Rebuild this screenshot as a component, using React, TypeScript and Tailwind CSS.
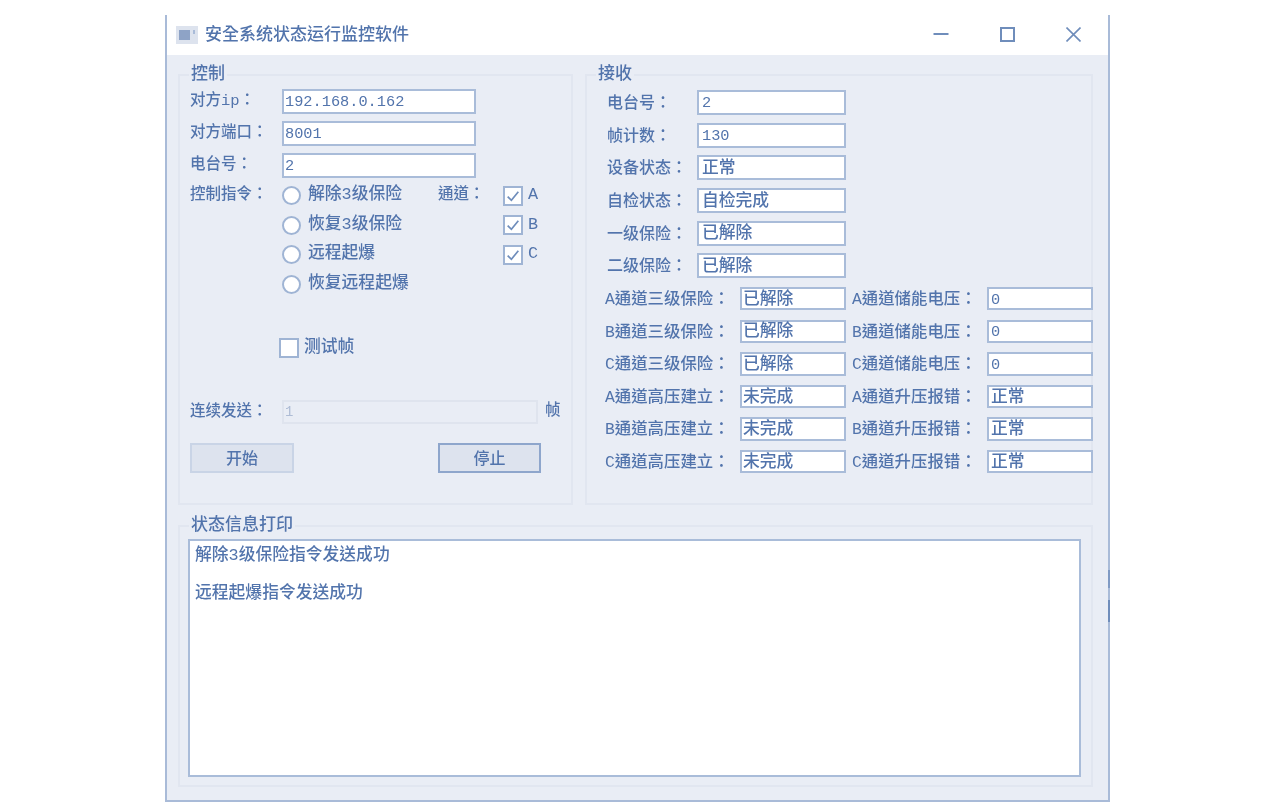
const labelText = "shrink-0 text-[15.5px] leading-none whitespace-nowrap text-[#5274ac] font-medium";

function Field({ value, className }: { value: string; className: string }) {
  const numeric = /^[0-9.]+$/.test(value);
  return (
    <div
      className={`flex shrink-0 items-center border-2 border-[#a9bcd9] bg-white pt-[3px] leading-none whitespace-nowrap text-[#5274ac] font-medium ${
        numeric ? "text-[15.3px]" : "text-[16.8px]"
      } ${className}`}
    >
      {value}
    </div>
  );
}

function Group({
  title,
  className,
  children,
}: {
  title: string;
  className: string;
  children: React.ReactNode;
}) {
  return (
    <div className={`relative border-2 border-[#e1e6f0] ${className}`}>
      <span className="absolute -top-[10px] left-[9px] bg-[#e9edf5] px-[2px] text-[17px] leading-[18px] font-medium whitespace-nowrap text-[#5274ac]">
        {title}
      </span>
      {children}
    </div>
  );
}

function Radio({ label }: { label: string }) {
  return (
    <div className="flex items-center gap-[7px]">
      <span className="h-[19px] w-[19px] rounded-full border-2 border-[#9fb4d4] bg-white" />
      <span className="text-[16.8px] leading-none font-medium whitespace-nowrap text-[#5274ac]">{label}</span>
    </div>
  );
}

function Check({ label, checked = true }: { label: string; checked?: boolean }) {
  return (
    <div className="flex items-center gap-[5px]">
      <span className="flex h-[20px] w-[20px] items-center justify-center border-2 border-[#9fb4d4] bg-white">
        {checked && (
          <svg width="16" height="16" viewBox="0 0 15 15" fill="none" stroke="#6f8dbb" strokeWidth="1.6">
            <path d="M2.5 8 L6 11.5 L12.5 3.5" />
          </svg>
        )}
      </span>
      <span className={`${labelText} text-[16.8px]`}>{label}</span>
    </div>
  );
}

const topRows = [
  ["电台号：", "2"],
  ["帧计数：", "130"],
  ["设备状态：", "正常"],
  ["自检状态：", "自检完成"],
  ["一级保险：", "已解除"],
  ["二级保险：", "已解除"],
];

const wideRows = [
  ["A通道三级保险：", "已解除", "A通道储能电压：", "0"],
  ["B通道三级保险：", "已解除", "B通道储能电压：", "0"],
  ["C通道三级保险：", "已解除", "C通道储能电压：", "0"],
  ["A通道高压建立：", "未完成", "A通道升压报错：", "正常"],
  ["B通道高压建立：", "未完成", "B通道升压报错：", "正常"],
  ["C通道高压建立：", "未完成", "C通道升压报错：", "正常"],
];

export default function App() {
  return (
    <div className="h-[802px] w-[1276px] overflow-hidden bg-white pt-[15px] pl-[165px] font-['Liberation_Mono','Noto_Sans_CJK_TC',monospace]">
      <div className="relative flex h-[787px] w-[945px] flex-col border-x-2 border-b-2 border-[#a9bbd8] blur-[0.7px]">
        {/* title bar */}
        <div className="flex h-[40px] shrink-0 items-center bg-white pl-[9px]">
          <svg width="22" height="18" viewBox="0 0 22 18">
            <rect width="22" height="18" fill="#dde3ee" />
            <rect x="3" y="4" width="11" height="10" fill="#8ea3c6" />
            <rect x="17" y="4" width="2" height="4" fill="#a9bbd8" />
          </svg>
          <span className="ml-[7px] text-[17px] leading-none font-medium whitespace-nowrap text-[#5274ac]">
            安全系统状态运行监控软件
          </span>
          <div className="ml-auto flex items-center gap-[51px] pr-[27px] pb-[2px]">
            <svg width="16" height="16" viewBox="0 0 16 16" stroke="#6f8dbb" strokeWidth="2" fill="none">
              <path d="M0.5 8 H15.5" />
            </svg>
            <svg width="15" height="15" viewBox="0 0 15 15" stroke="#6f8dbb" strokeWidth="2" fill="none">
              <rect x="1" y="1" width="13" height="13" />
            </svg>
            <svg width="15" height="15" viewBox="0 0 15 15" stroke="#6f8dbb" strokeWidth="1.6" fill="none">
              <path d="M0.5 0.5 L14.5 14.5 M14.5 0.5 L0.5 14.5" />
            </svg>
          </div>
        </div>

        {/* body */}
        <div className="flex flex-1 flex-col gap-[20px] bg-[#e9edf5] pt-[19px] pr-[15px] pl-[11px]">
          <div className="flex gap-[12px]">
            <Group title="控制" className="h-[431px] w-[395px] px-[10px] pt-[13px]">
              <div className="flex flex-col gap-[7px]">
                <div className="flex items-center">
                  <span className={`${labelText} w-[92px]`}>对方ip：</span>
                  <Field value="192.168.0.162" className="h-[25px] w-[194px] pl-[1px]" />
                </div>
                <div className="flex items-center">
                  <span className={`${labelText} w-[92px]`}>对方端口：</span>
                  <Field value="8001" className="h-[25px] w-[194px] pl-[1px]" />
                </div>
                <div className="flex items-center">
                  <span className={`${labelText} w-[92px]`}>电台号：</span>
                  <Field value="2" className="h-[25px] w-[194px] pl-[1px]" />
                </div>
              </div>

              <div className="mt-[3px] grid grid-cols-[92px_156px_65px_1fr] auto-rows-[29.5px] items-center">
                <span className={labelText}>控制指令：</span>
                <Radio label="解除3级保险" />
                <span className={labelText}>通道：</span>
                <Check label="A" />
                <span />
                <Radio label="恢复3级保险" />
                <span />
                <Check label="B" />
                <span />
                <Radio label="远程起爆" />
                <span />
                <Check label="C" />
                <span />
                <Radio label="恢复远程起爆" />
              </div>

              <div className="mt-[39px] pl-[89px]">
                <Check label="测试帧" checked={false} />
              </div>

              <div className="mt-[42px] flex items-center">
                <span className={`${labelText} w-[92px] pt-[2px]`}>连续发送：</span>
                <div className="flex h-[24px] w-[256px] shrink-0 items-center border-2 border-[#dfe4ee] pl-[1px] text-[14px] leading-none text-[#aebcd5]">
                  1
                </div>
                <span className={`${labelText} ml-[7px]`}>帧</span>
              </div>

              <div className="mt-[19px] flex items-center gap-[144px]">
                <button className="h-[30px] w-[104px] shrink-0 border-2 border-[#c9d4e6] bg-[#dde3ee] pt-[4px] text-[16px] leading-none font-medium text-[#5274ac]">
                  开始
                </button>
                <button className="h-[30px] w-[103px] shrink-0 border-2 border-[#8ea6cc] bg-[#dde3ee] pt-[4px] text-[16px] leading-none font-medium text-[#5274ac]">
                  停止
                </button>
              </div>
            </Group>

            <Group title="接收" className="h-[431px] w-[508px] pt-[14px] pl-[18px]">
              <div className="flex flex-col gap-[7.7px]">
                {topRows.map(([label, value]) => (
                  <div key={label} className="flex items-center">
                    <span className={`${labelText} w-[92px] pt-[3px] pl-[2px] text-[16px]`}>{label}</span>
                    <Field value={value} className="h-[25px] w-[149px] pl-[3px]" />
                  </div>
                ))}
              </div>
              <div className="mt-[8.5px] flex flex-col gap-[9.1px]">
                {wideRows.map(([labelA, valueA, labelB, valueB]) => (
                  <div key={labelA} className="flex items-center">
                    <span className={`${labelText} w-[135px] pt-[3px] text-[16.4px]`}>{labelA}</span>
                    <Field value={valueA} className="h-[23.5px] w-[106px] pl-[1px]" />
                    <span className={`${labelText} ml-[6px] w-[135px] pt-[3px] text-[16.4px]`}>{labelB}</span>
                    <Field value={valueB} className="h-[23.5px] w-[106px] pl-[2px]" />
                  </div>
                ))}
              </div>
            </Group>
          </div>

          <Group title="状态信息打印" className="h-[262px] w-[915px] px-[8px] pt-[13px]">
            <div className="-mt-[1px] h-[238px] w-[893px] border-2 border-[#a9bcd9] bg-white pt-[7px] pl-[5px] text-[16.8px] leading-none font-medium text-[#5274ac]">
              <p>解除3级保险指令发送成功</p>
              <p className="mt-[21px]">远程起爆指令发送成功</p>
            </div>
          </Group>
        </div>

        {/* stray marks on the right edge */}
        <div className="absolute top-[555px] -right-[2px] h-[18px] w-[2px] bg-[#7f9ac4]" />
        <div className="absolute top-[585px] -right-[2px] h-[22px] w-[2px] bg-[#6f8dbb]" />
      </div>
    </div>
  );
}
